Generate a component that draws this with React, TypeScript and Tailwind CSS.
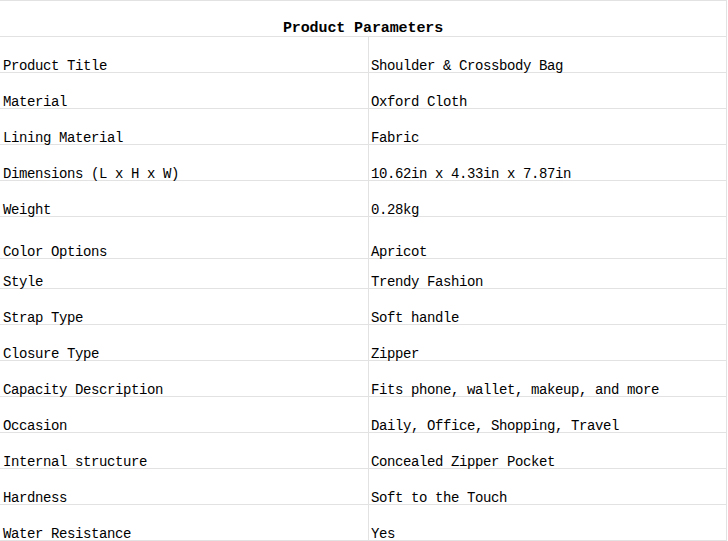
import React from "react";

const rows: { label: string; value: string; h: string }[] = [
  { label: "Product Title", value: "Shoulder & Crossbody Bag", h: "h-[36px]" },
  { label: "Material", value: "Oxford Cloth", h: "h-[36px]" },
  { label: "Lining Material", value: "Fabric", h: "h-[36px]" },
  { label: "Dimensions (L x H x W)", value: "10.62in x 4.33in x 7.87in", h: "h-[36px]" },
  { label: "Weight", value: "0.28kg", h: "h-[36px]" },
  { label: "Color Options", value: "Apricot", h: "h-[42px]" },
  { label: "Style", value: "Trendy Fashion", h: "h-[30px]" },
  { label: "Strap Type", value: "Soft handle", h: "h-[36px]" },
  { label: "Closure Type", value: "Zipper", h: "h-[36px]" },
  { label: "Capacity Description", value: "Fits phone, wallet, makeup, and more", h: "h-[36px]" },
  { label: "Occasion", value: "Daily, Office, Shopping, Travel", h: "h-[36px]" },
  { label: "Internal structure", value: "Concealed Zipper Pocket", h: "h-[36px]" },
  { label: "Hardness", value: "Soft to the Touch", h: "h-[36px]" },
  { label: "Water Resistance", value: "Yes", h: "h-[36px]" },
];

export default function App() {
  return (
    <div
      className="w-[728px] h-[541px] bg-white text-black overflow-hidden"
      style={{ fontFamily: '"Liberation Mono", "DejaVu Sans Mono", monospace' }}
    >
      <div className="w-[727px] border-t border-r border-[#e2e2e2] flex flex-col">
        <div className="h-[36px] border-b border-[#e2e2e2] flex items-end justify-center pb-[1px]">
          <span className="text-[15px] leading-[12px] font-bold tracking-[-0.1px]">
            Product Parameters
          </span>
        </div>
        {rows.map((r) => (
          <div
            key={r.label}
            className={`${r.h} border-b border-[#e2e2e2] grid grid-cols-[368px_1fr]`}
          >
            <div className="flex items-end pl-[3px] text-[14px] leading-[12px] tracking-[-0.4px] whitespace-nowrap">
              {r.label}
            </div>
            <div className="flex items-end pl-[2px] border-l border-[#e2e2e2] text-[14px] leading-[12px] tracking-[-0.4px] whitespace-nowrap">
              {r.value}
            </div>
          </div>
        ))}
      </div>
    </div>
  );
}
